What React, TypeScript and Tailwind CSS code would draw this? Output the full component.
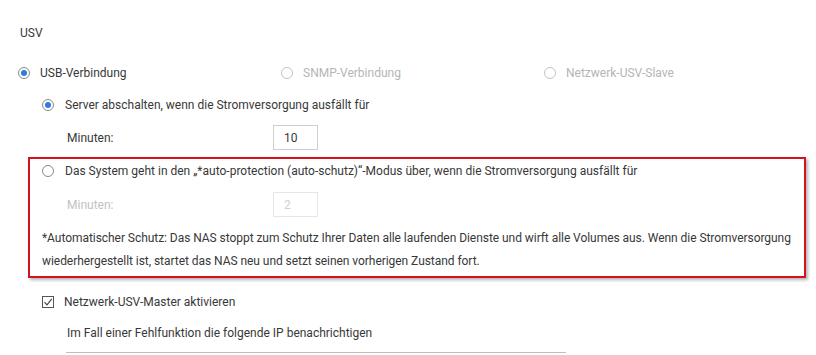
import React from "react";

function Radio({ checked, disabled }: { checked?: boolean; disabled?: boolean }) {
  return (
    <span
      className={`flex h-[12px] w-[12px] shrink-0 items-center justify-center rounded-full border ${
        disabled ? "border-[#c4c4c4]" : "border-[#8a8a8a]"
      }`}
    >
      {checked && <span className="h-[6px] w-[6px] rounded-full bg-[#2f7be0]" />}
    </span>
  );
}

function Checkbox() {
  return (
    <span className="flex h-[12px] w-[12px] shrink-0 items-center justify-center border border-[#555]">
      <svg width="10" height="10" viewBox="0 0 10 10" fill="none">
        <path d="M1.5 5.2 L4 7.8 L8.8 1.8" stroke="#444" strokeWidth="1.1" />
      </svg>
    </span>
  );
}

export default function App() {
  return (
    <div className="h-[355px] w-[816px] overflow-hidden bg-white pt-[23px] font-['Roboto',sans-serif] text-[12px] text-[#383838]">
      <div className="flex h-[20px] items-center pl-[20px]">USV</div>

      <div className="mt-[20px] grid h-[20px] grid-cols-[263px_263px_263px] items-center pl-[18px]">
        <label className="flex items-center gap-[10px]">
          <Radio checked />
          <span>USB-Verbindung</span>
        </label>
        <label className="flex items-center gap-[10px] text-[#b5b5b5]">
          <Radio disabled />
          <span>SNMP-Verbindung</span>
        </label>
        <label className="flex items-center gap-[10px] text-[#b5b5b5]">
          <Radio disabled />
          <span>Netzwerk-USV-Slave</span>
        </label>
      </div>

      <div className="mt-[12px] flex h-[20px] items-center gap-[11px] pl-[42px]">
        <Radio checked />
        <span>Server abschalten, wenn die Stromversorgung ausfällt für</span>
      </div>

      <div className="mt-[10px] flex h-[25px] items-center pl-[67px]">
        <span className="w-[206px]">Minuten:</span>
        <div className="flex h-[25px] w-[45px] items-center border border-[#cfcfcf] pl-[10px]">10</div>
      </div>

      <div className="mt-[7px] ml-[28px] w-[778px] border-2 border-[#d3121f] pb-[3px] shadow-[2px_2px_3px_rgba(0,0,0,0.3)]">
        <div className="flex h-[24px] items-center gap-[11px] pl-[12px]">
          <Radio />
          <span>Das System geht in den „*auto-protection (auto-schutz)“-Modus über, wenn die Stromversorgung ausfällt für</span>
        </div>
        <div className="mt-[9px] flex h-[25px] items-center pl-[37px] text-[#c2c2c2]">
          <span className="w-[206px]">Minuten:</span>
          <div className="flex h-[25px] w-[45px] items-center border border-[#e6e6e6] pl-[10px] text-[#d0d0d0]">2</div>
        </div>
        <p className="mt-[10px] pl-[12px] leading-[23px] tracking-[-0.05px]">
          *Automatischer Schutz: Das NAS stoppt zum Schutz Ihrer Daten alle laufenden Dienste und wirft alle Volumes aus. Wenn die Stromversorgung wiederhergestellt ist, startet das NAS neu und setzt seinen vorherigen Zustand fort.
        </p>
      </div>

      <div className="mt-[14px] flex h-[20px] items-center gap-[10px] pl-[42px]">
        <Checkbox />
        <span>Netzwerk-USV-Master aktivieren</span>
      </div>

      <div className="mt-[11px] flex h-[20px] items-center pl-[67px]">
        Im Fall einer Fehlfunktion die folgende IP benachrichtigen
      </div>

      <div className="mt-[9px] ml-[66px] h-px w-[500px] bg-[#bdbdbd]" />
    </div>
  );
}
